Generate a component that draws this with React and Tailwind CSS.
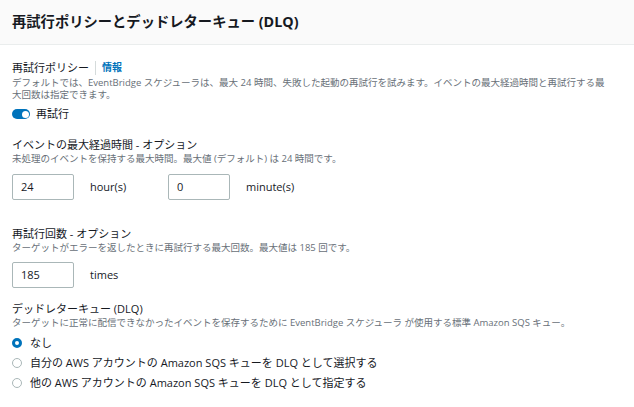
import { useState } from 'react';

const FONT = { fontFamily: '"Open Sans", "Noto Sans CJK JP", sans-serif' };

function Label({ children, className = '' }) {
  return <div className={`text-[11px] leading-[14px] text-[#16191f] ${className}`}>{children}</div>;
}

function Desc({ children, className = '' }) {
  return <div className={`text-[9.5px] leading-[12px] text-[#687078] ${className}`}>{children}</div>;
}

function NumberInput({ value }) {
  return (
    <div className="w-[62px] h-[26px] border border-[#aab7b8] rounded-[2px] flex items-center px-2 text-[11px] text-[#16191f]">
      {value}
    </div>
  );
}

function Radio({ checked, label }) {
  return (
    <div className="h-[20px] flex items-center gap-[8px]">
      {checked ? (
        <span className="w-[10px] h-[10px] rounded-full border-[3px] border-[#0073bb] bg-white" />
      ) : (
        <span className="w-[10px] h-[10px] rounded-full border border-[#aab7b8] bg-white" />
      )}
      <span className="text-[11px] text-[#16191f]">{label}</span>
    </div>
  );
}

export default function App() {
  const [retry] = useState(true);

  return (
    <div className="w-full min-h-screen bg-white" style={FONT}>
      <div className="h-[45px] bg-[#fafafa] border-b border-[#eaeded] px-3 flex items-center">
        <h2 className="text-[14.3px] font-bold text-[#16191f]">再試行ポリシーとデッドレターキュー (DLQ)</h2>
      </div>

      <div className="px-3 pt-[15px]">
        <div className="flex items-center">
          <Label>再試行ポリシー</Label>
          <span className="mx-[6px] h-[14px] border-l border-[#d5dbdb]" />
          <a className="text-[10px] font-bold text-[#0073bb]">情報</a>
        </div>
        <Desc className="mt-[2px] pr-[14px]">
          デフォルトでは、EventBridge スケジューラは、最大 24 時間、失敗した起動の再試行を試みます。イベントの最大経過時間と再試行する最大回数は指定できます。
        </Desc>

        <div className="mt-[6px] h-[14px] flex items-center gap-[6px]">
          <span className={`w-[18px] h-[10px] rounded-full flex items-center justify-end px-[1.5px] ${retry ? 'bg-[#0073bb]' : 'bg-[#687078]'}`}>
            <span className="w-[7px] h-[7px] rounded-full bg-white" />
          </span>
          <span className="text-[11px] text-[#16191f]">再試行</span>
        </div>

        <Label className="mt-[17px]">イベントの最大経過時間 - オプション</Label>
        <Desc className="mt-[1px]">未処理のイベントを保持する最大時間。最大値 (デフォルト) は 24 時間です。</Desc>

        <div className="mt-[9px] flex items-center">
          <NumberInput value="24" />
          <span className="ml-[16px] w-[78px] text-[11px] text-[#16191f]">hour(s)</span>
          <NumberInput value="0" />
          <span className="ml-[16px] text-[11px] text-[#16191f]">minute(s)</span>
        </div>

        <Label className="mt-[27px]">再試行回数 - オプション</Label>
        <Desc className="mt-[1px]">ターゲットがエラーを返したときに再試行する最大回数。最大値は 185 回です。</Desc>

        <div className="mt-[8px] flex items-center">
          <NumberInput value="185" />
          <span className="ml-[16px] text-[11px] text-[#16191f]">times</span>
        </div>

        <Label className="mt-[14px]">デッドレターキュー (DLQ)</Label>
        <Desc className="mt-[1px]">
          ターゲットに正常に配信できなかったイベントを保存するために EventBridge スケジューラ が使用する標準 Amazon SQS キュー。
        </Desc>

        <div className="mt-[4px] flex flex-col">
          <Radio checked label="なし" />
          <Radio label="自分の AWS アカウントの Amazon SQS キューを DLQ として選択する" />
          <Radio label="他の AWS アカウントの Amazon SQS キューを DLQ として指定する" />
        </div>
      </div>
    </div>
  );
}
